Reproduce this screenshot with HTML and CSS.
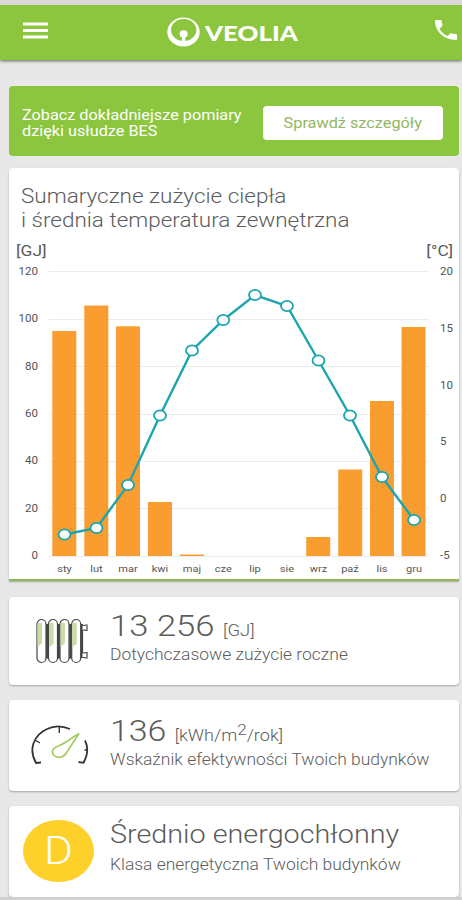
FILE: index.html
```
<!DOCTYPE html>
<html lang="pl">
  <head>
    <meta charset="UTF-8" />
    <meta name="viewport" content="width=device-width, initial-scale=1.0" />
    <title>Veolia</title>
    <link rel="stylesheet" href="styles.css">
  </head>
  <body>
    <header class="topbar">
      <button class="icon-button" aria-label="Menu">
        <svg width="25" height="17" viewBox="0 0 25 17">
          <path d="M0 2H25M0 8.5H25M0 15H25" stroke="#fff" stroke-width="2.8" />
        </svg>
      </button>
      <div class="brand">
        <svg width="33" height="30" viewBox="0 0 33 30">
          <ellipse cx="16.5" cy="15" rx="16.2" ry="14.6" fill="#fff" />
          <ellipse cx="16.7" cy="13" rx="12.7" ry="11" fill="#8cc63f" />
          <ellipse cx="16.6" cy="17" rx="4" ry="3.7" fill="#fff" />
          <path d="M15 18h3.2v8H15z" fill="#fff" />
        </svg>
        <span class="brand-name">VEOLIA</span>
      </div>
      <button class="icon-button phone" aria-label="Telefon">
        <svg width="22" height="20" viewBox="3 3 18 18" preserveAspectRatio="none">
          <path fill="#fff" d="M6.62 10.79c1.44 2.83 3.76 5.14 6.59 6.59l2.2-2.2c.27-.27.67-.36 1.02-.24 1.12.37 2.33.57 3.57.57.55 0 1 .45 1 1V20c0 .55-.45 1-1 1-9.39 0-17-7.61-17-17 0-.55.45-1 1-1h3.5c.55 0 1 .45 1 1 0 1.25.2 2.45.57 3.57.11.35.03.74-.25 1.02l-2.2 2.2z" />
        </svg>
      </button>
    </header>

    <main class="content">
      <section class="banner">
        <p class="banner-text"><span class="wide">Zobacz dokładniejsze pomiary<br>dzięki usłudze BES</span></p>
        <button class="banner-button"><span class="wide">Sprawdź szczegóły</span></button>
      </section>

      <section class="card chart-card">
        <h1 class="chart-title"><span class="wide">Sumaryczne zużycie ciepła<br>i średnia temperatura zewnętrzna</span></h1>
        <div class="units">
          <span class="wide">[GJ]</span>
          <span class="wide right">[°C]</span>
        </div>
        <svg class="chart" width="450" height="318" viewBox="9 261 450 318">
          <path class="grid" d="M49 271.5H429M49 319.5H429M49 366.5H429M49 414.5H429M49 461.5H429M49 508.5H429M49 556.5H429" />
          <g class="bars">
            <rect x="52.3" y="331" width="24" height="225" />
            <rect x="84.3" y="305.5" width="24" height="250.5" />
            <rect x="116" y="326.3" width="24" height="229.7" />
            <rect x="148" y="502" width="24" height="54" />
            <rect x="180" y="554.5" width="24" height="1.5" />
            <rect x="306.2" y="537" width="24" height="19" />
            <rect x="338.2" y="469.5" width="24" height="86.5" />
            <rect x="370" y="401" width="24" height="155" />
            <rect x="401.6" y="327" width="24" height="229" />
          </g>
          <polyline class="line" points="64.5,534.5 96.5,528 128,485 160,415.5 192,350.5 223.3,320 255,295 287,306 318.5,360.5 350,415.5 382,477 414,520" />
          <g class="points">
            <ellipse cx="64.5" cy="534.5" rx="6" ry="5.2" />
            <ellipse cx="96.5" cy="528" rx="6" ry="5.2" />
            <ellipse cx="128" cy="485" rx="6" ry="5.2" />
            <ellipse cx="160" cy="415.5" rx="6" ry="5.2" />
            <ellipse cx="192" cy="350.5" rx="6" ry="5.2" />
            <ellipse cx="223.3" cy="320" rx="6" ry="5.2" />
            <ellipse cx="255" cy="295" rx="6" ry="5.2" />
            <ellipse cx="287" cy="306" rx="6" ry="5.2" />
            <ellipse cx="318.5" cy="360.5" rx="6" ry="5.2" />
            <ellipse cx="350" cy="415.5" rx="6" ry="5.2" />
            <ellipse cx="382" cy="477" rx="6" ry="5.2" />
            <ellipse cx="414" cy="520" rx="6" ry="5.2" />
          </g>
          <g class="axis axis-left">
            <text x="38" y="275">120</text>
            <text x="38" y="322.5">100</text>
            <text x="38" y="370">80</text>
            <text x="38" y="417.5">60</text>
            <text x="38" y="464.5">40</text>
            <text x="38" y="512">20</text>
            <text x="38" y="559.5">0</text>
          </g>
          <g class="axis axis-right">
            <text x="440" y="275">20</text>
            <text x="440" y="332">15</text>
            <text x="440" y="389">10</text>
            <text x="440" y="445.5">5</text>
            <text x="440" y="502.5">0</text>
            <text x="440" y="559.5">-5</text>
          </g>
          <g class="axis months">
            <text x="64.5" y="572">sty</text>
            <text x="96.5" y="572">lut</text>
            <text x="128" y="572">mar</text>
            <text x="160" y="572">kwi</text>
            <text x="192" y="572">maj</text>
            <text x="223.3" y="572">cze</text>
            <text x="255" y="572">lip</text>
            <text x="287" y="572">sie</text>
            <text x="318.5" y="572">wrz</text>
            <text x="350" y="572">paź</text>
            <text x="382" y="572">lis</text>
            <text x="414" y="572">gru</text>
          </g>
        </svg>
      </section>

      <section class="card stat stat-usage">
        <div class="stat-icon">
          <svg width="54" height="46" viewBox="0 0 54 46">
            <path d="M9 8h40M9 12h36M9 36h36M9 40h36" stroke="#333" stroke-width="1.2" />
            <path d="M11.2 6v34M22.8 6v34M34.4 6v34M46 6v34" stroke="#444" stroke-width="2.2" />
            <g fill="#fff" stroke="#444" stroke-width="1.2">
              <rect x="1" y="1.5" width="9" height="43" rx="4.5" />
              <rect x="12.5" y="1.5" width="9" height="43" rx="4.5" />
              <rect x="24" y="1.5" width="9" height="43" rx="4.5" />
              <rect x="35.7" y="1.5" width="9" height="43" rx="4.5" />
              <path d="M46.5 7.5h2l1-.5h1.5v5.5h-1.5l-1-.5h-2M46.5 35h2l1-.5h1.5v5.5h-1.5l-1-.5h-2" />
            </g>
            <path d="M1.5 5h4.5v20l-4.5 4zM13 5h4.5v21l-4.5 3zM24.5 5h4.5v20l-4.5 4zM36.2 5h4.5v21l-4.5 3z" fill="#cbdba8" />
          </svg>
        </div>
        <div class="stat-text">
          <div class="stat-value"><span class="wide">13 256 <small>[GJ]</small></span></div>
          <div class="stat-label"><span class="wide">Dotychczasowe zużycie roczne</span></div>
        </div>
      </section>

      <section class="card stat stat-efficiency">
        <div class="stat-icon gauge">
          <svg width="60" height="42" viewBox="0 0 60 42" fill="none">
            <path d="M11 38.5l-5 .5C-2 25 4 11 17 5 24 1.5 32 1.5 40 5M55 16.5c3.5 7 2.5 15-1.5 22.3l-5-.8" stroke="#333" stroke-width="1.8" />
            <path d="M29.3 2.5v6.5M5 16l5 3M57.5 26h-3" stroke="#333" stroke-width="1.4" />
            <path d="M49 9.5L36 29.5c-3 4.5-9 5-12.5 1.5-3-4 .5-8 5.5-9.3C36 19 42 13.5 49 9.5z" stroke="#a5cb63" stroke-width="1.7" />
          </svg>
        </div>
        <div class="stat-text">
          <div class="stat-value"><span class="wide">136 <small>[kWh/m<sup>2</sup>/rok]</small></span></div>
          <div class="stat-label"><span class="wide">Wskaźnik efektywności Twoich budynków</span></div>
        </div>
      </section>

      <section class="card stat stat-class">
        <div class="grade"><span class="wide">D</span></div>
        <div class="stat-text">
          <div class="stat-value"><span class="wide">Średnio energochłonny</span></div>
          <div class="stat-label"><span class="wide">Klasa energetyczna Twoich budynków</span></div>
        </div>
      </section>
    </main>
  </body>
</html>
```
FILE: styles.css
```
* {
  box-sizing: border-box;
}
body {
  margin: 0;
  height: 900px;
  overflow: hidden;
  background-color: #e8e8e9;
  border-top: 5px solid #d9d9d9;
  border-bottom: 3px solid #d0d0d1;
  font-family: Roboto, sans-serif;
  color: #5c5c5c;
}
button {
  border: none;
  padding: 0;
  font-family: inherit;
  cursor: pointer;
}
/* extended look of the typeface */
.wide {
  display: inline-block;
  white-space: nowrap;
  transform: scaleX(1.16);
  transform-origin: left;
}
.wide.right {
  transform-origin: right;
}
.topbar {
  display: flex;
  justify-content: space-between;
  align-items: center;
  height: 55px;
  padding: 0 5px 5px 23px;
  background-color: #8cc63f;
  box-shadow: 0 1px 3px rgba(0, 0, 0, 0.6);
}
.icon-button {
  display: flex;
  background: none;
}
.brand {
  display: flex;
  align-items: center;
  gap: 5px;
  width: 150px;
  padding-top: 4px;
}
.brand-name {
  padding-top: 1px;
  color: #fff;
  font-family: Lato, sans-serif;
  font-size: 20px;
  font-weight: 900;
  line-height: 20px;
  transform: scaleX(1.29);
  transform-origin: left;
}
.content {
  display: flex;
  flex-direction: column;
  padding: 26px 3px 0 9px;
}
.banner {
  display: flex;
  justify-content: space-between;
  align-items: center;
  height: 70px;
  margin-bottom: 12px;
  padding: 3px 16px 0 13px;
  border-radius: 4px;
  background-color: #8bc63e;
}
.banner-text {
  margin: 0;
  color: #fff;
  font-size: 14px;
  font-weight: 400;
  line-height: 16px;
}
.banner-button {
  width: 180px;
  height: 34px;
  border-radius: 4px;
  background-color: #fff;
  color: #93b763;
  font-size: 15px;
}
.banner-button .wide,
.grade .wide {
  transform-origin: center;
}
.banner-button .wide {
  transform: scaleX(1.085);
}
.card {
  border-radius: 4px;
  background-color: #fff;
  box-shadow: 0 1px 2px rgba(0, 0, 0, 0.3);
}
.chart-card {
  height: 413px;
  margin-bottom: 16px;
  border-bottom: 2px solid #8fb950;
  border-radius: 4px 4px 0 0;
}
.chart-title {
  margin: 0;
  padding: 16px 0 0 12px;
  font-size: 20px;
  font-weight: 300;
  line-height: 24px;
}
.chart-title .wide {
  transform: scaleX(1.125);
}
.units {
  display: flex;
  justify-content: space-between;
  height: 29px;
  padding: 10px 6px 0 7px;
  font-size: 15px;
  line-height: 18px;
}
.chart {
  display: block;
}
.grid {
  stroke: #ececec;
}
.bars {
  fill: #f99d30;
}
.line {
  fill: none;
  stroke: #1ba5ae;
  stroke-width: 2.4;
}
.points {
  fill: #fff;
  stroke: #1ba5ae;
  stroke-width: 1.8;
}
.axis {
  fill: #555;
  font-size: 10px;
}
.axis text {
  transform: scaleX(1.16);
  transform-box: fill-box;
}
.axis-left {
  text-anchor: end;
}
.axis-left text {
  transform-origin: right;
}
.axis-right text {
  transform-origin: left;
}
.months {
  font-size: 9.5px;
  text-anchor: middle;
}
.months text {
  transform-origin: center;
}
.stat {
  display: flex;
  height: 88px;
  margin-bottom: 15px;
}
.stat-icon {
  width: 101px;
  padding: 21px 0 0 27px;
}
.gauge {
  padding: 24px 0 0 21px;
}
.stat-text {
  padding-top: 12px;
}
.stat-value {
  height: 34px;
  font-size: 30px;
  font-weight: 300;
  line-height: 34px;
}
.stat-value small {
  font-size: 16px;
}
.stat-value sup {
  font-size: 15px;
  line-height: 0;
}
.stat-label {
  font-size: 16px;
  font-weight: 300;
  line-height: 24px;
}
.stat-label .wide {
  transform: scaleX(1.09);
}
.stat-usage .stat-value .wide {
  transform: scaleX(1.155);
}
.stat-efficiency {
  height: 91px;
}
.stat-efficiency .stat-text {
  padding-top: 14px;
}
.stat-efficiency .stat-value .wide {
  transform: scaleX(1.13);
}
.stat-class {
  height: 91px;
  margin-bottom: 0;
}
.stat-class .stat-label {
  padding-top: 1px;
}
.grade {
  display: flex;
  justify-content: center;
  align-items: center;
  width: 71px;
  height: 62px;
  margin: 14px 16px 0 14px;
  border-radius: 50%;
  background-color: #fdd02a;
  color: #fff;
  font-size: 38px;
  font-weight: 300;
}
.stat-class .stat-value {
  font-size: 25px;
}
.stat-class .stat-value .wide {
  transform: scaleX(1.15);
}
```
